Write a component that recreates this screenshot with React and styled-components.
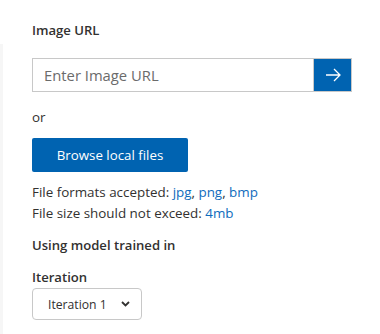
import React from "react";
import styled, { createGlobalStyle } from "styled-components";

const Global = createGlobalStyle`
  html, body { margin: 0; padding: 0; background: #fff; }
  body { font-family: "Open Sans", "Noto Sans", sans-serif; color: #323130; }
  * { box-sizing: border-box; }
`;

const Root = styled.div`
  display: flex;
  width: 380px;
  height: 334px;
  overflow: hidden;
`;

const Edge = styled.div`
  width: 3px;
  margin-top: 44px;
  background: #f6f6f6;
  flex: none;
`;

const Content = styled.div`
  flex: 1;
  padding: 21px 0 0 29px;
  display: flex;
  flex-direction: column;
`;

const Label = styled.div`
  font-size: 13.1px;
  font-weight: 600;
  line-height: 18px;
  color: #323130;
  margin-bottom: ${(p) => p.$mb || 0}px;
`;

const UrlRow = styled.div`
  display: flex;
  width: 320px;
  height: 34px;
`;

const UrlInput = styled.input`
  flex: 1;
  min-width: 0;
  height: 34px;
  border: 1px solid #c8c8c8;
  border-right: none;
  padding: 0 11px;
  font-family: inherit;
  font-size: 14.8px;
  color: #323130;
  outline: none;
  &::placeholder { color: #6b6b6b; }
`;

const GoButton = styled.button`
  width: 39px;
  height: 34px;
  flex: none;
  border: 1px solid #c8c8c8;
  background: #0063b1;
  display: flex;
  align-items: center;
  justify-content: center;
  padding: 0;
  cursor: pointer;
`;

const Text = styled.div`
  font-size: 13.4px;
  line-height: 21px;
  color: #323130;
`;

const Or = styled(Text)`
  margin-top: 15px;
`;

const BrowseButton = styled.button`
  margin-top: 10px;
  width: 156px;
  height: 34px;
  background: #0063b1;
  border: none;
  border-radius: 2px;
  color: #fff;
  font-family: inherit;
  font-size: 13.3px;
  padding: 0;
  cursor: pointer;
`;

const Info = styled.div`
  margin-top: 10px;
  display: flex;
  flex-direction: column;
`;

const Link = styled.span`
  color: #0f6cbd;
`;

const Section = styled.div`
  margin-top: 12px;
  display: flex;
  flex-direction: column;
`;

const SelectWrap = styled.div`
  position: relative;
  width: 110px;
  height: 32px;
  margin-top: 2px;
`;

const Select = styled.select`
  appearance: none;
  width: 100%;
  height: 100%;
  border: 1px solid #c8c8c8;
  border-radius: 4px;
  background: #fff;
  font-family: inherit;
  font-size: 12.2px;
  color: #323130;
  padding: 0 0 0 15px;
  outline: none;
`;

const Chevron = styled.svg`
  position: absolute;
  right: 12px;
  top: 13px;
  pointer-events: none;
`;

export default function App() {
  return (
    <>
      <Global />
      <Root>
        <Edge />
        <Content>
          <Label $mb={19}>Image URL</Label>
          <UrlRow>
            <UrlInput placeholder="Enter Image URL" />
            <GoButton aria-label="Submit">
              <svg width="16" height="14" viewBox="0 0 16 14" fill="none">
                <path d="M1 7h14M9 1l6 6-6 6" stroke="#fff" strokeWidth="1.3" />
              </svg>
            </GoButton>
          </UrlRow>
          <Or>or</Or>
          <BrowseButton>Browse local files</BrowseButton>
          <Info>
            <Text>
              File formats accepted: <Link>jpg</Link>, <Link>png</Link>, <Link>bmp</Link>
            </Text>
            <Text>
              File size should not exceed: <Link>4mb</Link>
            </Text>
          </Info>
          <Section>
            <Label $mb={14}>Using model trained in</Label>
            <Label>Iteration</Label>
          </Section>
          <SelectWrap>
            <Select defaultValue="1">
              <option value="1">Iteration 1</option>
            </Select>
            <Chevron width="9" height="6" viewBox="0 0 9 6">
              <path d="M1 1l3.5 3.5L8 1" stroke="#323130" strokeWidth="1.8" fill="none" />
            </Chevron>
          </SelectWrap>
        </Content>
      </Root>
    </>
  );
}
